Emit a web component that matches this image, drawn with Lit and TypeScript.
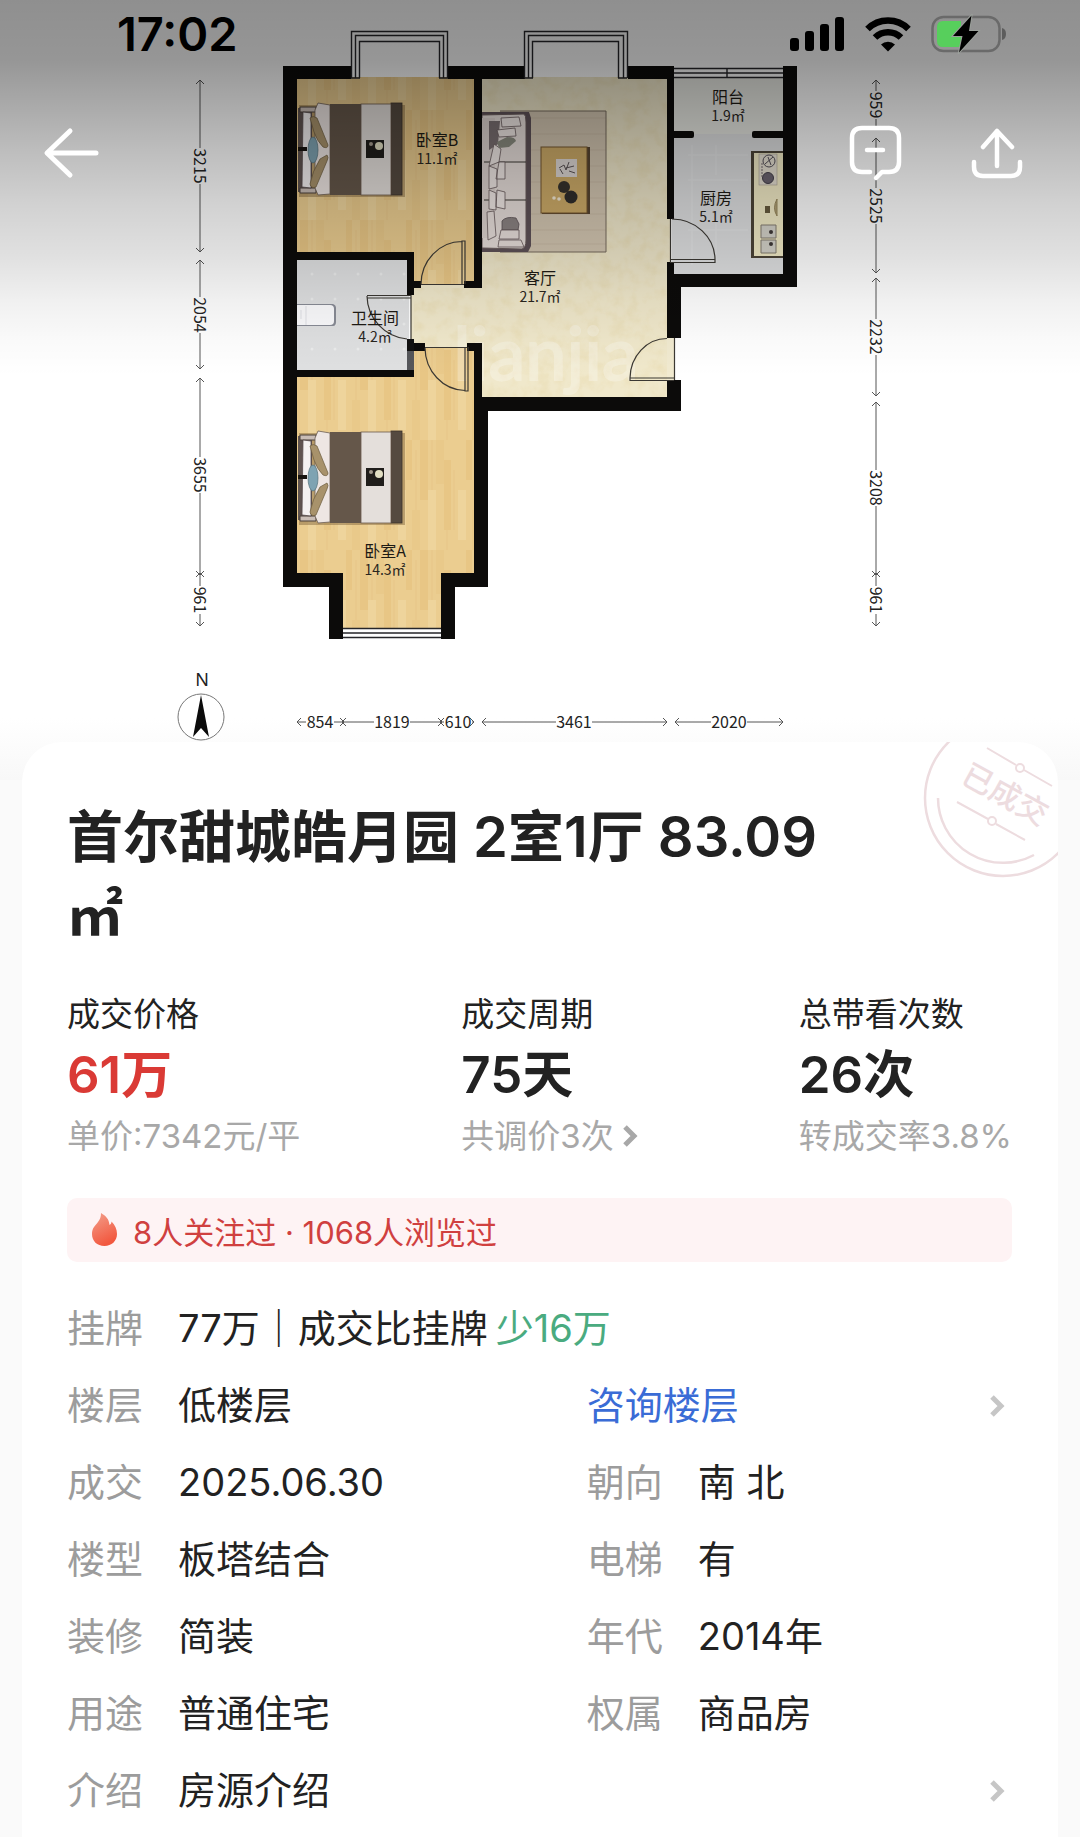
import { LitElement, html, svg, css } from "lit";
import { customElement } from "lit/decorators.js";

type Box = [number, number, number, number];

const WALLS: Box[] = [
  [283, 66, 14, 521], [283, 66, 68, 13], [448, 66, 77, 13], [628, 66, 46, 13],
  [474, 66, 8, 222], [297, 252, 117, 8], [407, 252, 7, 43], [407, 281, 14, 7],
  [464, 281, 18, 7], [297, 370, 117, 7], [407, 343, 18, 8], [467, 343, 15, 8],
  [474, 343, 8, 60], [474, 397, 14, 190], [474, 397, 207, 14], [283, 573, 60, 14],
  [441, 573, 47, 14], [329, 573, 14, 66], [441, 573, 14, 66], [667, 66, 7, 153],
  [667, 262, 7, 76], [667, 274, 14, 64], [667, 380, 14, 31], [667, 274, 130, 13],
  [783, 66, 14, 221],
];

const SOFT_WALLS: Box[] = [[667, 131, 27, 7], [752, 131, 36, 7]];

interface Room { name: string; area: string; x: number; y: number }
const ROOMS: Room[] = [
  { name: "卧室B", area: "11.1㎡", x: 437, y: 146 },
  { name: "客厅", area: "21.7㎡", x: 540, y: 284 },
  { name: "阳台", area: "1.9㎡", x: 728, y: 103 },
  { name: "厨房", area: "5.1㎡", x: 716, y: 204 },
  { name: "卫生间", area: "4.2㎡", x: 375, y: 324 },
  { name: "卧室A", area: "14.3㎡", x: 385, y: 557 },
];

interface Dim { from: number; to: number; at: number; label: string }
const LEFT_DIMS: Dim[] = [
  { from: 79, to: 253, at: 166, label: "3215" },
  { from: 259, to: 370, at: 315, label: "2054" },
  { from: 377, to: 576, at: 475, label: "3655" },
  { from: 572, to: 627, at: 600, label: "961" },
];
const RIGHT_DIMS: Dim[] = [
  { from: 79, to: 131, at: 105, label: "959" },
  { from: 137, to: 274, at: 206, label: "2525" },
  { from: 277, to: 397, at: 337, label: "2232" },
  { from: 401, to: 576, at: 488, label: "3208" },
  { from: 572, to: 627, at: 600, label: "961" },
];
const BOTTOM_DIMS: Dim[] = [
  { from: 296, to: 345, at: 320, label: "854" },
  { from: 341, to: 443, at: 392, label: "1819" },
  { from: 439, to: 475, at: 458, label: "610" },
  { from: 481, to: 668, at: 574, label: "3461" },
  { from: 674, to: 784, at: 729, label: "2020" },
];

@customElement("floor-plan")
class FloorPlan extends LitElement {
  static styles = css`
    :host { display: block; }
    .plan { display: block; width: 100%; height: auto; }
    .wall { fill: #0c0b0a; }
    .thin { fill: none; stroke: #3b3833; stroke-width: 1.2; }
    .sash { fill: none; stroke: #26262a; stroke-width: 1.4; }
    .room { font: 16px "Noto Sans CJK SC", sans-serif; fill: #1d1a14; text-anchor: middle; }
    .area { font: 14px "Noto Sans CJK SC", sans-serif; fill: #2a261e; text-anchor: middle; }
    .dim { font: 16px "Noto Sans CJK SC", sans-serif; fill: #222; text-anchor: middle; }
    .north { font: 18px "Noto Sans", sans-serif; fill: #222; text-anchor: middle; }
    .rule { fill: none; stroke: #555; stroke-width: 1; }
    .mark { font: 400 74px Lato, sans-serif; fill: #fff; stroke: #fff; stroke-width: 2; opacity: 0.26; text-anchor: middle; }
  `;

  private dim(d: Dim) {
    const half = d.label.length * 4 + 2;
    const a = d.from + 1;
    const b = d.to - 1;
    return svg`
      <path class="rule" d="M${a} 0H${Math.max(a, d.at - half)}M${Math.min(b, d.at + half)} 0H${b}
        M${a + 4} -4L${a} 0L${a + 4} 4M${b - 4} -4L${b} 0L${b - 4} 4"/>
      <text class="dim" x=${d.at} y="6">${d.label}</text>`;
  }

  private bed(dy: number) {
    return svg`
      <g transform="translate(0 ${dy})">
        <rect x="299" y="105" width="106" height="92" fill="#7a5f38" opacity=".45"/>
        <path d="M298 108h14v84h-14z" fill="#5f5350"/>
        <path d="M300 107h16v5h-16zM300 188h16v5h-16z" fill="#c9bdb6" stroke="#4a403b"/>
        <path d="M303 112l8 1v75l-9-1z" fill="#f4f1f1" stroke="#554a4a" stroke-width=".8"/>
        <path d="M318 103l12 2v89l-12 1l-3-7v-78z" fill="#eee6e3" stroke="#6b5d54" stroke-width=".8"/>
        <path d="M310 118q3-3 7 0l11 27q0 4-5 2q-6-6-9-15z" fill="#a8926b" stroke="#6c5b3d" stroke-width=".7"/>
        <path d="M327 155q2 2 0 6l-11 26q-5 2-6-3q2-12 10-25z" fill="#a8926b" stroke="#6c5b3d" stroke-width=".7"/>
        <path d="M298 147h9v4h-9z" fill="#17130f"/>
        <ellipse cx="313" cy="150" rx="5" ry="13" fill="#7fa3b2" stroke="#56727d" stroke-width=".7"/>
        <rect x="330" y="104" width="32" height="91" fill="#65574a"/>
        <rect x="391" y="103" width="11" height="92" fill="#554a40" stroke="#3c322a" stroke-width=".8"/>
        <rect x="361" y="104" width="30" height="91" fill="#e4dfdb" stroke="#69594d" stroke-width=".8"/>
        <rect x="366" y="140" width="18" height="18" fill="#201e1b"/>
        <circle cx="371" cy="144" r="2" fill="#a49c8f"/>
        <circle cx="379" cy="146" r="4" fill="#e2dfc3"/>
      </g>`;
  }

  private sofa() {
    return svg`
      <rect x="500" y="111" width="106" height="141" fill="#d3c6b1"/>
      <path d="M500 118h106M500 134h106M500 150h106M500 166h106M500 182h106M500 198h106M500 214h106M500 230h106M500 244h106" stroke="#bfae98" opacity=".5"/>
      <path d="M500 111h106v141H500" fill="none" stroke="#776a5c"/>
      <path d="M482 112h47l2 6v128l-3 6h-46z" fill="#5e5157"/>
      <path d="M482 115l42-1q2 1 2 8v118q0 8-4 9l-40-1z" fill="#e8dfdb" stroke="#6a5c5c"/>
      <path d="M482 118h13v120h-13z" fill="#ded4d0"/>
      <path d="M484 162h42M484 200h42" class="thin"/>
      <path d="M489 121h11l-2 23l-9 6z" fill="#7b7072"/>
      <path d="M501 118l18-1l2 9l-19 1zM497 130l18-2l1 8l-17 1zM494 144l7 5l-2 13l-10 4z
        M499 162h6v17h-9zM489 166l8 3v18l-8 2zM497 190l8 2v17l-9-2zM489 190l7 3v17l-7-1z" fill="#f1e9e6" stroke="#67595b" stroke-width=".8"/>
      <path d="M497 142l10-5q8 0 9 4l-7 6l-10 1z" fill="#8a8b7f"/>
      <path d="M487 212l7-1l2 25l-8 4z" fill="#e9e0dc" stroke="#67595b" stroke-width=".8"/>
      <path d="M502 221q4-5 14-3l3 6l-1 6h-16z" fill="#8b8382" stroke="#5c5254" stroke-width=".8"/>
      <path d="M501 230h18v9h-20zM499 240h22l3 7h-26z" fill="#e9e0dc" stroke="#67595b" stroke-width=".8"/>
      <rect x="542" y="147" width="48" height="67" fill="#574532"/>
      <rect x="541" y="147" width="46" height="66" fill="#cdab68" stroke="#74572e"/>
      <rect x="556" y="159" width="21" height="18" fill="#ded8d5"/>
      <path d="M559 168l5-3l2 5l3-8M563 174l-3-5M566 168l8-2M569 171l6 2" fill="none" stroke="#5b5355"/>
      <circle cx="564" cy="187" r="6" fill="#36322c"/>
      <circle cx="571" cy="197" r="6.500" fill="#2f2d2b"/>
      <circle cx="554" cy="198" r="1.800" fill="#f4ead6"/>
      <circle cx="559" cy="199" r="1.800" fill="#f4ead6"/>`;
  }

  private counter() {
    return svg`
      <rect x="751" y="151" width="32" height="107" fill="#4c4437"/>
      <rect x="754" y="153" width="29" height="103" fill="#f3ecc7"/>
      <rect x="759" y="154" width="18" height="31" fill="#e6e0d2" stroke="#aaa194" stroke-width=".6"/>
      <circle cx="769" cy="161" r="6" fill="none" stroke="#555059"/>
      <path d="M765 164l8-7M768 157l3 8" stroke="#555059"/>
      <circle cx="768" cy="178" r="5.500" fill="#6b6470" stroke="#433f49"/>
      <path d="M762 163v14" stroke="#776d70" stroke-dasharray="2 1"/>
      <path d="M777 199q-5 9 0 17z" fill="#b3a478" stroke="#98885d"/>
      <rect x="765" y="206" width="5" height="7" fill="#675b3d"/>
      <path d="M761 225h15v13h-15zM761 240h15v13h-15z" fill="#d5d3ca" stroke="#857f73"/>
      <circle cx="771" cy="232" r="2" fill="#3f3a38"/>
      <circle cx="771" cy="244" r="2" fill="#3f3a38"/>`;
  }

  render() {
    return html`
      <svg class="plan" viewBox="0 0 1080 780" role="img" aria-label="户型图">
        <defs>
          <pattern id="wood" width="60" height="110" patternUnits="userSpaceOnUse">
            <rect width="60" height="110" fill="#ebcd90"/>
            <path d="M0 0h8v60H0zM24 20h7v70h-7zM46 0h6v40h-6z" fill="#e8c685"/>
            <path d="M8 50h8v60H8zM38 50h8v50h-8z" fill="#eed49c"/>
            <path d="M16 0h8v44h-8zM52 70h8v40h-8z" fill="#e9c98a"/>
            <path d="M12 0v50M34 30v60M56 10v60M27 90v20" stroke="#dfba7a" stroke-width=".8" opacity=".6"/>
          </pattern>
          <pattern id="tile" x="310" y="272" width="23" height="25" patternUnits="userSpaceOnUse">
            <rect width="23" height="25" fill="#dfe0e1"/>
            <circle cx="2" cy="2" r="1.500" fill="#ebecec"/>
          </pattern>
          <filter id="grain" x="0" y="0" width="100%" height="100%">
            <feTurbulence type="fractalNoise" baseFrequency=".08" numOctaves="3" seed="4"/>
            <feColorMatrix values="0 0 0 0 .78  0 0 0 0 .66  0 0 0 0 .36  0 0 0 1.600 -.65"/>
          </filter>
        </defs>

        <rect x="297" y="77" width="177" height="210" fill="url(#wood)"/>
        <rect x="297" y="260" width="112" height="112" fill="url(#tile)"/>
        <path d="M482 77H671V400H482V347H411V285H482Z" fill="#f0e8cb"/>
        <rect x="482" y="77" width="189" height="322" filter="url(#grain)" opacity=".5"/>
        <rect x="414" y="288" width="68" height="59" filter="url(#grain)" opacity=".5"/>
        <path d="M414 347H476V575H441V630H343V575H297V376H414Z" fill="url(#wood)"/>
        <rect x="674" y="78" width="110" height="56" fill="#e8e9e3"/>
        <rect x="672" y="134" width="112" height="142" fill="#dfe0e1"/>
        <path d="M688 155h60M688 180h60M688 230h60M692 145v120M716 145v30M716 222v40" stroke="#e8e9e9" stroke-width="1.500" opacity=".6"/>

        ${this.bed(0)} ${this.bed(328)} ${this.sofa()} ${this.counter()}

        <path d="M297 304h36q3 1 3 4v14q0 4-3 4h-36z" fill="#888b95"/>
        <path d="M297 305h33q4 0 4 4v12q0 4-4 4h-33z" fill="#fafafc"/>
        <path d="M306 306v19M301 310v9" stroke="#dfe0e5" fill="none"/>

        <text class="mark" x="546" y="380">lianjia</text>

        ${WALLS.map((w) => svg`<rect class="wall" x=${w[0]} y=${w[1]} width=${w[2]} height=${w[3]}/>`)}
        ${SOFT_WALLS.map((w) => svg`<rect class="wall" rx="2" x=${w[0]} y=${w[1]} width=${w[2]} height=${w[3]}/>`)}
        <rect x="407" y="339" width="7" height="31" fill="#55565a"/>
        <rect x="407" y="339" width="7" height="12" fill="#111"/>

        <path class="sash" d="M351.500 78V31.500H447.500V78M355.500 78V35.500H443.500V78M359.500 78V41.500H439.500V78M351 78h9M439 78h9"/>
        <path class="sash" d="M524.500 78V31.500H627.500V78M528.500 78V35.500H623.500V78M532.500 78V41.500H618.500V78M524 78h9M618 78h9"/>
        <path d="M674 68h109v10H674zM343 628h98v9h-98z" fill="#fff"/>
        <path class="sash" d="M674 68.500H783M674 73H783M674 77.500H783M727 68v10M343 628.500H441M343 633H441M343 637.500H441"/>

        <path class="thin" d="M421 284.500H464M462 284V241H465V284M462 241.500A41 43 0 0 0 421 284.500"/>
        <path class="thin" d="M411 295V339M367 295.500H411M367 298H411M367 296A44 44 0 0 0 407 339"/>
        <path class="thin" d="M425 347.500H467M465 347V391H468V347M425 348A41 43 0 0 0 465 390.500"/>
        <path class="thin" d="M670.500 219V262M670 259.500H715V262.500H670M672 219A43 41 0 0 1 715 259.500"/>
        <path d="M667 338h8v42h-8z" fill="#f1ead0"/>
        <path d="M675 338h6v42h-6z" fill="#fff"/>
        <path class="thin" d="M674.500 338V380M674 378H630V380.500H674M667 338.500A37 40 0 0 0 630 378"/>

        ${ROOMS.map((r) => svg`
          <text class="room" x=${r.x} y=${r.y}>${r.name}</text>
          <text class="area" x=${r.x} y=${r.y + 18}>${r.area}</text>`)}

        <g transform="matrix(0 1 -1 0 200 0)">${LEFT_DIMS.map((d) => this.dim(d))}</g>
        <g transform="matrix(0 1 -1 0 876 0)">${RIGHT_DIMS.map((d) => this.dim(d))}</g>
        <g transform="translate(0 722)">${BOTTOM_DIMS.map((d) => this.dim(d))}</g>

        <text class="north" x="202" y="686">N</text>
        <circle cx="201" cy="717" r="23" fill="#fff" stroke="#777"/>
        <path d="M201 695L209 737L201 728L193 737Z" fill="#0b0b0b"/>
      </svg>`;
  }
}

const chevron = html`
  <svg class="chevron" viewBox="0 0 16 24" aria-hidden="true">
    <path d="M3 3L12 12L3 21" fill="none" stroke="currentColor" stroke-width="5"/>
  </svg>`;

interface Fact { label: string; value: string }
const FACTS: [Fact, Fact][] = [
  [{ label: "成交", value: "2025.06.30" }, { label: "朝向", value: "南 北" }],
  [{ label: "楼型", value: "板塔结合" }, { label: "电梯", value: "有" }],
  [{ label: "装修", value: "简装" }, { label: "年代", value: "2014年" }],
  [{ label: "用途", value: "普通住宅" }, { label: "权属", value: "商品房" }],
];

@customElement("app-root")
class AppRoot extends LitElement {
  static styles = css`
    :host {
      display: flex;
      flex-direction: column;
      min-height: 100vh;
      background: #fafafa;
      color: #222;
      font-family: Inter, "Noto Sans CJK SC", sans-serif;
    }
    * { box-sizing: border-box; }
    svg { display: block; flex: none; }
    button { border: 0; padding: 0; background: none; font: inherit; color: inherit; cursor: pointer; }
    a { color: inherit; text-decoration: none; }

    .hero { display: grid; background: linear-gradient(#fff 92%, #f8f8f8); }
    .hero > * { grid-area: 1 / 1; min-width: 0; }
    .scrim {
      height: 376px;
      background: linear-gradient(
        rgba(0, 0, 0, 0.44), rgba(0, 0, 0, 0.41) 16%, rgba(0, 0, 0, 0.34) 27%,
        rgba(0, 0, 0, 0.26) 40%, rgba(0, 0, 0, 0.18) 54%, rgba(0, 0, 0, 0.12) 68%,
        rgba(0, 0, 0, 0.06) 80%, rgba(0, 0, 0, 0.02) 91%, rgba(0, 0, 0, 0));
    }
    .chrome { align-self: start; }
    .status {
      display: flex;
      align-items: center;
      justify-content: space-between;
      height: 68px;
      padding: 0 73px 0 117px;
      color: #000;
    }
    .clock { font-size: 47px; line-height: 56px; font-weight: 600; }
    .radios { display: flex; align-items: center; gap: 20px; }
    .nav {
      display: flex;
      align-items: center;
      padding: 54px 55px 0 42px;
      gap: 64px;
      color: #fff;
    }
    .back { margin-right: auto; }

    .card {
      flex: 1;
      position: relative;
      margin: -38px 22px 0;
      padding: 56px 46px 0 45px;
      border-radius: 40px 40px 0 0;
      background: #fff;
      overflow: hidden;
    }
    .stamp { position: absolute; top: 0; right: 0; width: 140px; height: 140px; color: #eddcdf; }
    .stamp-text { font: 500 31px "Noto Sans CJK SC", sans-serif; fill: currentColor; text-anchor: middle; }
    .title { margin: 0; padding-right: 160px; font-size: 56px; line-height: 78px; font-weight: 600; }

    .stats { display: flex; justify-content: space-between; margin-top: 32px; }
    .stat { display: flex; flex-direction: column; align-items: flex-start; }
    .stat-label { font-size: 33px; line-height: 56px; }
    .stat-value { font-size: 51px; line-height: 66px; font-weight: 600; }
    .price { color: #da3a35; }
    .stat-note { display: flex; align-items: center; gap: 8px; font-size: 33px; line-height: 56px; color: #a8a8a8; }
    .chevron { width: 16px; height: 24px; }

    .heat {
      display: flex;
      align-items: center;
      gap: 15px;
      height: 64px;
      margin: 34px 0 28px;
      padding: 0 24px;
      border-radius: 10px;
      background: #fef3f4;
      color: #d0403f;
      font-size: 31px;
    }

    .row { display: grid; grid-template-columns: 55% 45%; align-items: center; font-size: 38px; line-height: 77px; }
    .wide { display: flex; }
    .fact { display: flex; gap: 35px; }
    .key { color: #9c9c9c; }
    .less { color: #4aab80; padding-left: 8px; }
    .ask { display: flex; align-items: center; justify-content: space-between; padding-right: 7px; color: #3a6cd6; }
    .intro { display: flex; align-items: center; justify-content: space-between; padding-right: 7px; font-size: 38px; line-height: 77px; }
    .ask .chevron, .intro .chevron { color: #c6c6c6; }
  `;

  private fact(f: Fact) {
    return html`<div class="fact"><span class="key">${f.label}</span><span>${f.value}</span></div>`;
  }

  private statusBar() {
    return html`
      <div class="status">
        <span class="clock">17:02</span>
        <div class="radios">
          <svg width="55" height="36" viewBox="0 0 55 36" fill="currentColor" aria-hidden="true">
            <rect x="0" y="22" width="9" height="13" rx="3"/>
            <rect x="15" y="15" width="9" height="20" rx="3"/>
            <rect x="30" y="8" width="9" height="27" rx="3"/>
            <rect x="45" y="1" width="9" height="34" rx="3"/>
          </svg>
          <svg width="46" height="36" viewBox="0 0 46 36" aria-hidden="true">
            <g fill="none" stroke="currentColor" stroke-width="6.500">
              <path d="M2.500 13A29 29 0 0 1 43.500 13"/>
              <path d="M10 21.500A18.500 18.500 0 0 1 36 21.500"/>
            </g>
            <path d="M16 28.500A10 10 0 0 1 30 28.500L23 35.500Z" fill="currentColor"/>
          </svg>
          <svg width="76" height="40" viewBox="0 0 76 40" aria-hidden="true">
            <rect x="1.500" y="3" width="67" height="34" rx="11" fill="none" stroke="#6a6a6a" stroke-width="2.500"/>
            <path d="M71 14q4 1 4 6t-4 6z" fill="#5d5d5d"/>
            <path d="M12 7H30V33H12q-6 0-6-6V13q0-6 6-6z" fill="#57cf5c"/>
            <path d="M40.500 1.500L22 22H31.500L28 38.500L47.500 17H38Z" fill="#000" stroke="#9a9f9a" stroke-width="2" paint-order="stroke"/>
          </svg>
        </div>
      </div>`;
  }

  private navBar() {
    return html`
      <nav class="nav">
        <button class="back" aria-label="返回">
          <svg width="60" height="56" viewBox="0 0 60 56" fill="none" stroke="currentColor" stroke-width="5" stroke-linecap="round" stroke-linejoin="round">
            <path d="M54 29H6M28 7L5 29L28 51"/>
          </svg>
        </button>
        <button aria-label="消息">
          <svg width="60" height="60" viewBox="0 0 60 60" fill="none" stroke="currentColor" stroke-width="4.500" stroke-linecap="round" stroke-linejoin="round">
            <path d="M25 50H17Q7 50 7 40V16Q7 6 17 6H44Q54 6 54 16V40Q54 50 44 50H37L31 56M22 28H38"/>
          </svg>
        </button>
        <button aria-label="分享">
          <svg width="56" height="60" viewBox="0 0 56 60" fill="none" stroke="currentColor" stroke-width="4.500" stroke-linecap="round" stroke-linejoin="round">
            <path d="M28 44V9M14 25L28 9L43 25M5 40V45Q5 54 14 54H42Q51 54 51 45V40"/>
          </svg>
        </button>
      </nav>`;
  }

  render() {
    return html`
      <header class="hero">
        <floor-plan></floor-plan>
        <div class="scrim"></div>
        <div class="chrome">${this.statusBar()} ${this.navBar()}</div>
      </header>

      <main class="card">
        <svg class="stamp" viewBox="0 0 140 140">
          <g fill="none" stroke="currentColor" stroke-width="2.500">
            <circle cx="85" cy="56" r="78"/>
            <path d="M20 56A65 65 0 0 0 116 113"/>
            <path d="M69 6L98 23M106 28L134 44M39 60L70 77M78 82L107 98" stroke-width="2"/>
            <circle cx="102" cy="26" r="4" stroke-width="2"/>
            <circle cx="74" cy="79" r="4" stroke-width="2"/>
          </g>
          <text class="stamp-text" transform="translate(82 62) rotate(29)">已成交</text>
        </svg>

        <h1 class="title">首尔甜城皓月园 2室1厅 83.09㎡</h1>

        <section class="stats">
          <div class="stat">
            <span class="stat-label">成交价格</span>
            <span class="stat-value price">61万</span>
            <span class="stat-note">单价:7342元/平</span>
          </div>
          <div class="stat">
            <span class="stat-label">成交周期</span>
            <span class="stat-value">75天</span>
            <button class="stat-note">共调价3次 ${chevron}</button>
          </div>
          <div class="stat">
            <span class="stat-label">总带看次数</span>
            <span class="stat-value">26次</span>
            <span class="stat-note">转成交率3.8%</span>
          </div>
        </section>

        <div class="heat">
          <svg width="27" height="34" viewBox="0 0 27 34" aria-hidden="true">
            <defs>
              <linearGradient id="flame" x1="0" y1="0" x2=".4" y2="1">
                <stop offset="0" stop-color="#f3a08c"/>
                <stop offset="1" stop-color="#f2583f"/>
              </linearGradient>
            </defs>
            <path d="M10 0C15 3 18 6 18.500 12C20 11 20.500 10 20.500 8.500C24 12 26 16 26 21C26 28 20.500 33 13.500 33C6 33 1 28 1 21C1 15 4 13 7 9C9 6.500 10 4 10 0Z" fill="url(#flame)"/>
          </svg>
          <span>8人关注过 · 1068人浏览过</span>
        </div>

        <section>
          <div class="row wide">
            <div class="fact">
              <span class="key">挂牌</span>
              <span>77万｜成交比挂牌<span class="less">少16万</span></span>
            </div>
          </div>
          <div class="row">
            ${this.fact({ label: "楼层", value: "低楼层" })}
            <a class="ask" href="#floor">咨询楼层 ${chevron}</a>
          </div>
          ${FACTS.map(([a, b]) => html`<div class="row">${this.fact(a)} ${this.fact(b)}</div>`)}
          <a class="intro" href="#intro">
            ${this.fact({ label: "介绍", value: "房源介绍" })} ${chevron}
          </a>
        </section>
      </main>`;
  }
}
